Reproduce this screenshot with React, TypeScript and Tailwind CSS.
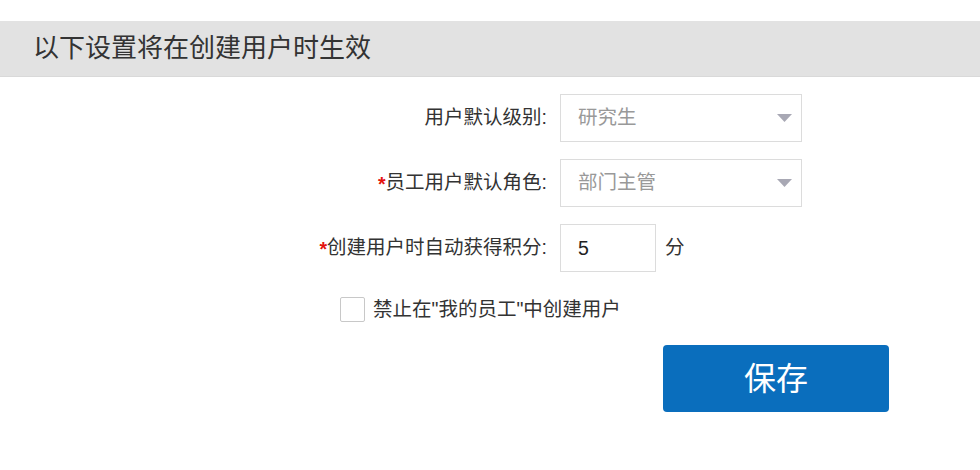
import { useState } from "react";

function Arrow() {
  return (
    <svg width="15" height="8" viewBox="0 0 15 8" className="absolute right-[9px] top-1/2 -translate-y-1/2">
      <polygon points="0,0 15,0 7.5,8" fill="#a8a8b4" />
    </svg>
  );
}

function SelectBox({ value }: { value: string }) {
  return (
    <div className="relative ml-[13px] flex h-[48px] w-[242px] items-center border border-[#dcdcdc] bg-white pl-[17px] text-[#999]">
      {value}
      <Arrow />
    </div>
  );
}

function Label({ text, required }: { text: string; required?: boolean }) {
  return (
    <div className="w-[547px] text-right text-[#333]">
      {required && <span className="relative top-[2px] font-bold text-[#e4120f]">*</span>}
      {text}:
    </div>
  );
}

export default function App() {
  const [score, setScore] = useState("5");
  const [blocked, setBlocked] = useState(false);

  return (
    <div className="h-[470px] w-[980px] bg-white pt-[21px] font-['Liberation_Sans','Noto_Sans_CJK_SC',sans-serif] text-[19.5px]">
      {/* Section header */}
      <div className="flex h-[56px] items-center border-b border-[#d9d9d9] bg-[#e2e2e2] pl-[33px] text-[26px] text-[#333]">
        以下设置将在创建用户时生效
      </div>

      <div className="mt-[17px] flex flex-col">
        <div className="flex h-[48px] items-center">
          <Label text="用户默认级别" />
          <SelectBox value="研究生" />
        </div>

        <div className="mt-[17px] flex h-[48px] items-center">
          <Label text="员工用户默认角色" required />
          <SelectBox value="部门主管" />
        </div>

        <div className="mt-[17px] flex h-[48px] items-center">
          <Label text="创建用户时自动获得积分" required />
          <input
            value={score}
            onChange={(e) => setScore(e.target.value)}
            className="ml-[13px] h-[48px] w-[96px] border border-[#dcdcdc] pl-[17px] text-[#222] outline-none"
          />
          <span className="ml-[9px] text-[#333]">分</span>
        </div>

        <label className="mt-[25px] flex h-[25px] items-center pl-[340px] text-[#333]">
          <button
            type="button"
            onClick={() => setBlocked(!blocked)}
            className="mr-[8px] h-[25px] w-[25px] rounded-[2px] border border-[#c8c8c8] bg-white"
          >
            {blocked && <span className="text-[16px] text-[#0a6dbd]">✓</span>}
          </button>
          禁止在"我的员工"中创建用户
        </label>

        <div className="mt-[23px] pl-[663px]">
          <button className="h-[67px] w-[226px] rounded-[4px] bg-[#0a6ebd] text-[32px] text-white">
            保存
          </button>
        </div>
      </div>
    </div>
  );
}
